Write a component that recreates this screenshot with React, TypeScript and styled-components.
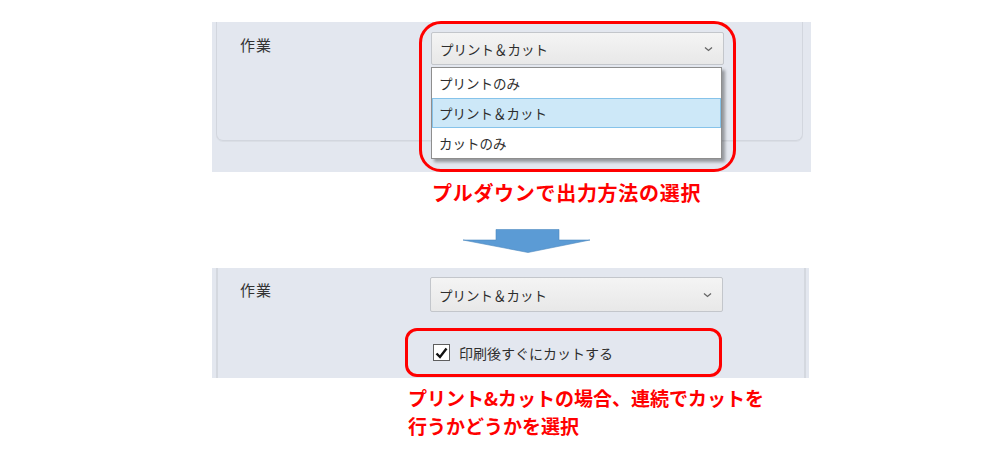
import { createGlobalStyle, styled } from "styled-components";

const Global = createGlobalStyle`
  html, body {
    margin: 0;
    padding: 0;
    background: #ffffff;
  }
  body {
    width: 1001px;
    height: 450px;
    overflow: hidden;
    font-family: "Noto Sans CJK JP", "Noto Sans", sans-serif;
  }
`;

const Page = styled.div`
  display: flex;
  flex-direction: column;
  align-items: flex-start;
  padding: 22px 0 0 212px;
`;

const Shot = styled.div<{ $w: number; $h: number; $mt?: number }>`
  position: relative;
  width: ${(p) => p.$w}px;
  height: ${(p) => p.$h}px;
  margin-top: ${(p) => p.$mt ?? 0}px;
  background: #e3e7ef;
`;

const CardBottom = styled.div`
  box-sizing: border-box;
  margin-left: 4px;
  width: 587px;
  height: 119px;
  border: 1px solid #d2d6de;
  border-top: none;
  border-radius: 0 0 7px 7px;
  box-shadow: 0 1px 0 #dadee5;
`;

const CardMiddle = styled.div`
  box-sizing: border-box;
  margin-left: 4px;
  width: 590px;
  height: 100%;
  border-left: 2px solid #d4d8df;
  border-right: 2px solid #d4d8df;
  display: flex;
  flex-direction: column;
`;

const Row = styled.div<{ $top: number; $left: number }>`
  display: flex;
  align-items: flex-start;
  padding: ${(p) => p.$top}px 0 0 ${(p) => p.$left}px;
`;

const Label = styled.div<{ $w: number }>`
  width: ${(p) => p.$w}px;
  margin-top: 2px;
  font-size: 15px;
  line-height: 22px;
  letter-spacing: 1px;
  color: #333333;
`;

const Select = styled.div<{ $h: number }>`
  box-sizing: border-box;
  width: 293px;
  height: ${(p) => p.$h}px;
  display: flex;
  align-items: center;
  justify-content: space-between;
  padding: 0 10px 0 8px;
  border: 1px solid #c3c6cb;
  border-radius: 2px;
  background: linear-gradient(#f4f4f4, #e8e8e8);
  font-size: 13.5px;
  color: #2e2e2e;
`;

const Menu = styled.div`
  position: absolute;
  left: 219px;
  top: 45px;
  width: 291px;
  box-sizing: border-box;
  background: #ffffff;
  border: 1px solid #8e8e8e;
  box-shadow: 3px 3px 3px rgba(0, 0, 0, 0.35);
  display: flex;
  flex-direction: column;
`;

const Item = styled.div<{ $active?: boolean }>`
  box-sizing: border-box;
  height: 30px;
  display: flex;
  align-items: center;
  padding-left: 6px;
  font-size: 13.5px;
  color: #2e2e2e;
  background: ${(p) => (p.$active ? "#cde8f8" : "transparent")};
  border: 1px solid ${(p) => (p.$active ? "#86c3ea" : "transparent")};
`;

const Frame = styled.div`
  position: absolute;
  left: 207px;
  top: -1px;
  width: 317px;
  height: 151px;
  box-sizing: border-box;
  border: 3px solid #ff0000;
  border-radius: 22px;
  pointer-events: none;
`;

const CheckFrame = styled.div`
  box-sizing: border-box;
  margin: 16px 0 0 187px;
  width: 317px;
  height: 49px;
  border: 3px solid #ff0000;
  border-radius: 12px;
  display: flex;
  align-items: center;
  gap: 9px;
  padding-left: 25px;
  font-size: 14px;
  color: #2e2e2e;
`;

const Box = styled.span`
  box-sizing: border-box;
  width: 17px;
  height: 17px;
  border: 1px solid #5e5e5e;
  background: #ffffff;
  display: flex;
  align-items: center;
  justify-content: center;
`;

const Caption = styled.div<{ $size: number; $left: number; $top: number; $ls: number }>`
  margin: ${(p) => p.$top}px 0 0 ${(p) => p.$left}px;
  font-size: ${(p) => p.$size}px;
  line-height: 28px;
  font-weight: 700;
  color: #ff0000;
  white-space: nowrap;
  letter-spacing: ${(p) => p.$ls}px;
`;

const Arrow = styled.svg`
  display: block;
  margin: 22px 0 0 250px;
`;

const Chevron = () => (
  <svg width="9" height="6" viewBox="0 0 9 6">
    <path d="M1 1.5 L4.5 4.5 L8 1.5" fill="none" stroke="#666" strokeWidth="1.3" />
  </svg>
);

export default function App() {
  const options = ["プリントのみ", "プリント＆カット", "カットのみ"];
  return (
    <>
      <Global />
      <Page>
        <Shot $w={599} $h={150}>
          <CardBottom>
            <Row $top={10} $left={23}>
              <Label $w={191}>作業</Label>
              <Select $h={33}>
                <span>プリント＆カット</span>
                <Chevron />
              </Select>
            </Row>
          </CardBottom>
          <Menu>
            {options.map((o) => (
              <Item key={o} $active={o === "プリント＆カット"}>
                {o}
              </Item>
            ))}
          </Menu>
          <Frame />
        </Shot>
        <Caption $size={20} $left={220} $top={7} $ls={0.7}>
          プルダウンで出力方法の選択
        </Caption>
        <Arrow width="130" height="25" viewBox="0 0 130 25">
          <polygon
            points="34,0.5 97,0.5 97,11 128,11 66,23.5 1,11 34,11"
            fill="#5b9bd5"
            stroke="#4f89c0"
            strokeWidth="0.6"
          />
        </Arrow>
        <Shot $w={597} $h={110} $mt={14}>
          <CardMiddle>
            <Row $top={9} $left={22}>
              <Label $w={190}>作業</Label>
              <Select $h={35}>
                <span>プリント＆カット</span>
                <Chevron />
              </Select>
            </Row>
            <CheckFrame>
              <Box>
                <svg width="13" height="12" viewBox="0 0 13 12">
                  <path d="M1.5 6.5 L5 10 L11.5 1.5" fill="none" stroke="#111" strokeWidth="2.4" />
                </svg>
              </Box>
              <span>印刷後すぐにカットする</span>
            </CheckFrame>
          </CardMiddle>
        </Shot>
        <Caption $size={19} $left={196} $top={6} $ls={0}>
          プリント&amp;カットの場合、連続でカットを
          <br />
          行うかどうかを選択
        </Caption>
      </Page>
    </>
  );
}
